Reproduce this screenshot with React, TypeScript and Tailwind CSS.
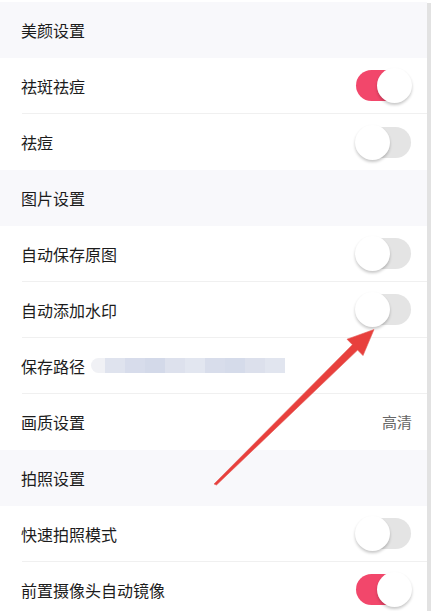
import React from "react";

const font = { fontFamily: '"Noto Sans CJK SC", "Noto Sans", sans-serif' };

function Toggle({ on }: { on: boolean }) {
  return (
    <div className="relative w-[57px] h-[35px] flex items-center">
      <div
        className={
          "w-[55px] h-[31px] rounded-full ml-[1px] " +
          (on ? "bg-[#f2476b]" : "bg-[#e4e4e4]")
        }
      />
      <div
        className={
          "absolute top-0 w-[35px] h-[35px] rounded-full bg-white shadow-[0_2px_3px_rgba(0,0,0,0.22)] " +
          (on ? "right-0" : "left-0")
        }
      />
    </div>
  );
}

function Header({ title }: { title: string }) {
  return (
    <div className="h-[56px] bg-[#f8f8fb] flex items-center pl-[21px] text-[16px] text-[#1c1c1c]">
      {title}
    </div>
  );
}

function Row({
  label,
  right,
  divider = true,
}: {
  label: string;
  right?: React.ReactNode;
  divider?: boolean;
}) {
  return (
    <div className="h-[56px] bg-white flex flex-col">
      <div className="flex-1 flex items-center justify-between pl-[21px] pr-[15px]">
        <span className="text-[16px] text-[#1c1c1c]">{label}</span>
        {right}
      </div>
      {divider ? <div className="h-px bg-[#f0f0f0] ml-[22px]" /> : null}
    </div>
  );
}

function Blur() {
  const blocks = [
    "#dfe3ee",
    "#d7dceb",
    "#d3d9e9",
    "#dde1ed",
    "#e2e6f0",
    "#d8ddeb",
    "#d5dbea",
    "#dce0ec",
    "#e1e5ef",
  ];
  return (
    <div className="flex items-center ml-[6px] h-[15px]">
      <div className="w-[14px] h-[15px] rounded-l-full bg-[#f0f1f5]" />
      {blocks.map((c, i) => (
        <div key={i} className="w-[20px] h-[15px]" style={{ backgroundColor: c }} />
      ))}
    </div>
  );
}

export default function App() {
  return (
    <div className="relative w-[433px] h-[611px] overflow-hidden bg-white" style={font}>
      <div className="pt-[2px] pr-[6px]">
        <Header title="美颜设置" />
        <Row label="祛斑祛痘" right={<Toggle on />} />
        <Row label="祛痘" right={<Toggle on={false} />} divider={false} />
        <Header title="图片设置" />
        <Row label="自动保存原图" right={<Toggle on={false} />} />
        <Row label="自动添加水印" right={<Toggle on={false} />} />
        <div className="h-[56px] bg-white flex flex-col">
          <div className="flex-1 flex items-center pl-[21px]">
            <span className="text-[16px] text-[#1c1c1c]">保存路径</span>
            <Blur />
          </div>
          <div className="h-px bg-[#f0f0f0] ml-[22px]" />
        </div>
        <Row
          label="画质设置"
          right={<span className="text-[15px] text-[#666]">高清</span>}
          divider={false}
        />
        <Header title="拍照设置" />
        <Row label="快速拍照模式" right={<Toggle on={false} />} />
        <Row label="前置摄像头自动镜像" right={<Toggle on />} />
      </div>
      <div className="absolute right-[2px] top-[3px] bottom-0 w-[4px] bg-[#e2e2e2]" />
      <svg className="absolute left-0 top-0" width="433" height="611" viewBox="0 0 433 611">
        <polygon
          points="214,484 352.4,344.7 347,339.2 374,329.5 363,355.6 357.6,350.1 216.5,485"
          fill="#e8403d"
          stroke="#e25a55"
          strokeWidth="0.6"
          strokeLinejoin="round"
        />
      </svg>
    </div>
  );
}
